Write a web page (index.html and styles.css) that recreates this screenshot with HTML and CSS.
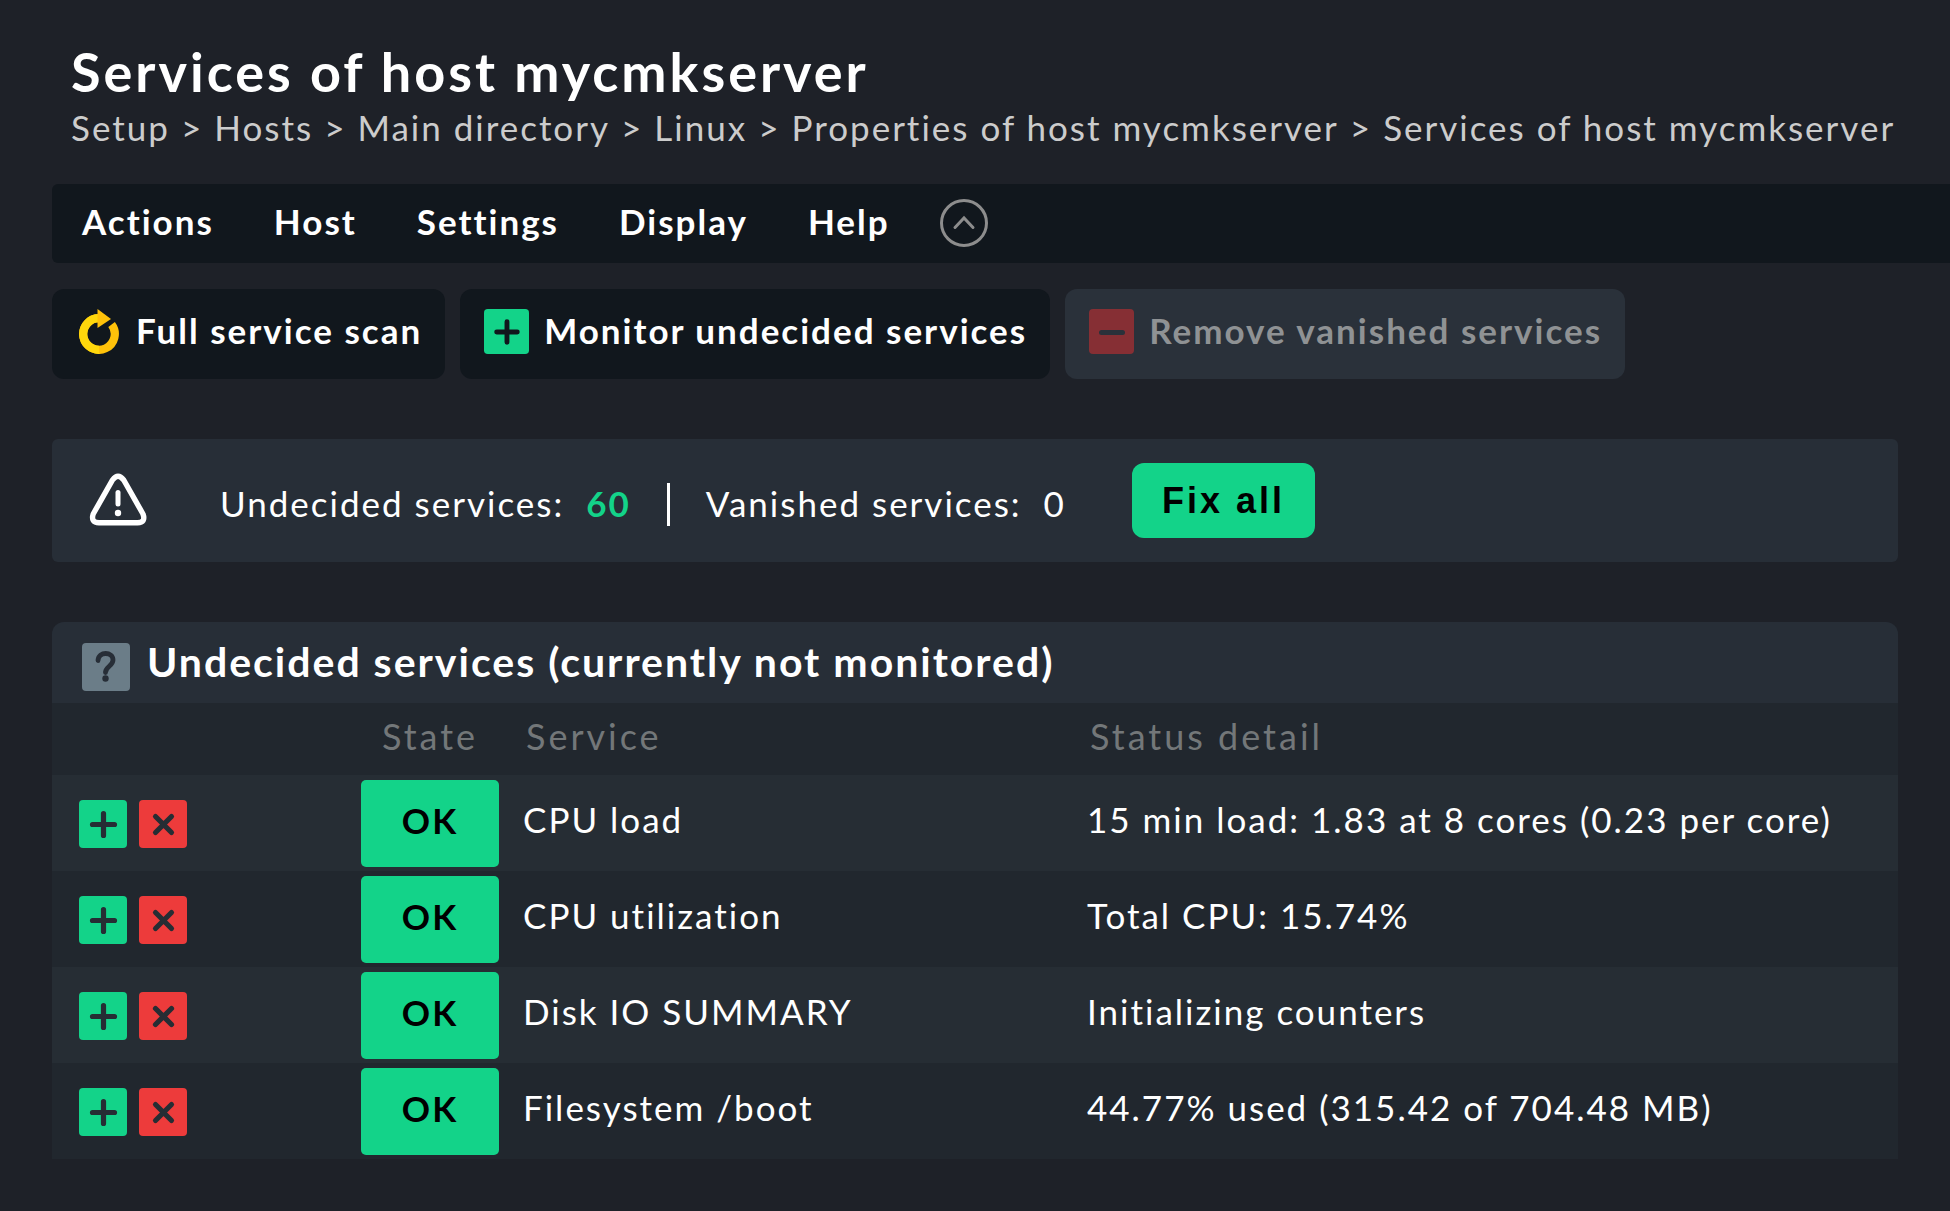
FILE: index.html
```html
<!DOCTYPE html>
<html lang="en">
<head>
<meta charset="utf-8">
<meta name="viewport" content="width=device-width, initial-scale=1">
<title>Services of host mycmkserver</title>
<link rel="stylesheet" href="styles.css">
</head>
<body>
<svg class="sprite" aria-hidden="true">
  <symbol id="plus" viewBox="0 0 48 48">
    <rect width="48" height="48" rx="4" fill="#13d389"/>
    <path d="M24.500 13.500v22M13.500 24.500h22" fill="none" stroke="currentColor" stroke-width="5.200" stroke-linecap="round"/>
  </symbol>
  <symbol id="cross" viewBox="0 0 48 48">
    <rect width="48" height="48" rx="4" fill="#ed3b3b"/>
    <path d="M16.500 16.500l16 16M32.500 16.500l-16 16" fill="none" stroke="currentColor" stroke-width="5.200" stroke-linecap="round"/>
  </symbol>
</svg>

<header class="page-header">
  <h1 class="title">Services of host mycmkserver</h1>
  <nav class="breadcrumb" aria-label="Breadcrumb">
    <a href="#">Setup</a><span>&gt;</span>
    <a href="#">Hosts</a><span>&gt;</span>
    <a href="#">Main directory</a><span>&gt;</span>
    <a href="#">Linux</a><span>&gt;</span>
    <a href="#">Properties of host mycmkserver</a><span>&gt;</span>
    <a href="#">Services of host mycmkserver</a>
  </nav>
</header>

<div class="menubar">
  <nav class="menu" aria-label="Page menu">
    <a href="#">Actions</a>
    <a href="#">Host</a>
    <a href="#">Settings</a>
    <a href="#">Display</a>
    <a href="#">Help</a>
  </nav>
  <button class="icon-button" type="button" aria-label="Hide shortcuts">
    <svg class="icon-48" viewBox="0 0 48 48"><circle cx="24" cy="24" r="22.500" fill="none" stroke="#8d8d8d" stroke-width="3"/><path d="M15 28.500l9-9.500 9 9.500" fill="none" stroke="#8d8d8d" stroke-width="3" stroke-linecap="round"/></svg>
  </button>
</div>

<div class="shortcuts">
  <button class="shortcut" type="button">
    <svg class="icon-45" viewBox="0 0 45 45"><path d="M23 9.200A15.800 15.800 0 1 0 35.600 15.500" fill="none" stroke="#ffc20a" stroke-width="8.200"/><path d="M23 9.200a15.800 15.800 0 0 0 0 31.600" fill="none" stroke="#ffd80c" stroke-width="8.200"/><path d="M21.500 0v19l13.500-9z" fill="#ffc20a"/></svg>
    <span>Full service scan</span>
  </button>
  <button class="shortcut" type="button">
    <svg class="icon-45"><use href="#plus"/></svg>
    <span>Monitor undecided services</span>
  </button>
  <button class="shortcut" type="button" disabled>
    <svg class="icon-45" viewBox="0 0 45 45"><rect width="45" height="45" rx="4" fill="#862f34"/><path d="M12.500 23.500h21" stroke="#2a313a" stroke-width="5" stroke-linecap="round"/></svg>
    <span>Remove vanished services</span>
  </button>
</div>

<main class="content">
  <section class="message">
    <svg class="icon-60" viewBox="0 0 60 60"><path d="M24.500 9Q30 1.500 35.700 9L55 43Q58 51.500 49.500 51.800H11Q2.500 51.500 5.200 43Z" fill="none" stroke="#fff" stroke-width="5.400"/><path d="M30 21.500v11.500" stroke="#fff" stroke-width="5" stroke-linecap="round"/><circle cx="30" cy="42" r="3.200" fill="#fff"/></svg>
    <p class="counts">
      <span>Undecided services:</span><strong>60</strong>
      <span class="divider"></span>
      <span>Vanished services:</span><span>0</span>
    </p>
    <button class="fix" type="button">Fix all</button>
  </section>

  <section class="panel">
    <h2 class="panel-title">
      <svg class="icon-48" viewBox="0 0 48 48"><rect width="48" height="48" rx="4" fill="#6b7d88"/><path d="M16 17.500C16.500 8 31 8.500 31 17c0 6-7.500 6.500-7.500 12.500" fill="none" stroke="#272e37" stroke-width="4.800" stroke-linecap="round"/><circle cx="23.500" cy="35.500" r="3.200" fill="#272e37"/></svg>
      Undecided services (currently not monitored)
    </h2>
    <table class="services">
      <colgroup><col class="col-actions"><col class="col-state"><col class="col-service"><col></colgroup>
      <thead>
        <tr><td></td><th scope="col" class="state">State</th><th scope="col">Service</th><th scope="col" class="detail">Status detail</th></tr>
      </thead>
      <tbody>
        <tr>
          <td><div class="actions"><button class="icon-button" type="button" aria-label="Monitor CPU load"><svg class="icon-48"><use href="#plus"/></svg></button><button class="icon-button" type="button" aria-label="Disable CPU load"><svg class="icon-48"><use href="#cross"/></svg></button></div></td>
          <td class="state"><span class="ok">OK</span></td><td>CPU load</td><td class="detail">15 min load: 1.83 at 8 cores (0.23 per core)</td>
        </tr>
        <tr>
          <td><div class="actions"><button class="icon-button" type="button" aria-label="Monitor CPU utilization"><svg class="icon-48"><use href="#plus"/></svg></button><button class="icon-button" type="button" aria-label="Disable CPU utilization"><svg class="icon-48"><use href="#cross"/></svg></button></div></td>
          <td class="state"><span class="ok">OK</span></td><td>CPU utilization</td><td class="detail">Total CPU: 15.74%</td>
        </tr>
        <tr>
          <td><div class="actions"><button class="icon-button" type="button" aria-label="Monitor Disk IO SUMMARY"><svg class="icon-48"><use href="#plus"/></svg></button><button class="icon-button" type="button" aria-label="Disable Disk IO SUMMARY"><svg class="icon-48"><use href="#cross"/></svg></button></div></td>
          <td class="state"><span class="ok">OK</span></td><td>Disk IO SUMMARY</td><td class="detail">Initializing counters</td>
        </tr>
        <tr>
          <td><div class="actions"><button class="icon-button" type="button" aria-label="Monitor Filesystem /boot"><svg class="icon-48"><use href="#plus"/></svg></button><button class="icon-button" type="button" aria-label="Disable Filesystem /boot"><svg class="icon-48"><use href="#cross"/></svg></button></div></td>
          <td class="state"><span class="ok">OK</span></td><td>Filesystem /boot</td><td class="detail">44.77% used (315.42 of 704.48 MB)</td>
        </tr>
      </tbody>
    </table>
  </section>
</main>
</body>
</html>
```
FILE: styles.css
```css
* {
  box-sizing: border-box;
}

body {
  margin: 0;
  padding: 40px 0 52px 52px;
  background: #1e2128;
  color: #fff;
  font: 400 35px/42px Lato, sans-serif;
  letter-spacing: 2px;
}

a {
  color: inherit;
  text-decoration: none;
}

button {
  border: 0;
  font: inherit;
  letter-spacing: inherit;
  color: inherit;
  cursor: pointer;
}

svg {
  display: block;
  flex: none;
}

.sprite {
  display: none;
}

.icon-45 {
  width: 45px;
  height: 45px;
}

.icon-48 {
  width: 48px;
  height: 48px;
}

.icon-60 {
  width: 60px;
  height: 60px;
}

.icon-button {
  padding: 0;
  background: none;
}

/* Title and breadcrumb */
.page-header {
  padding: 0 19px 36px;
}

.title {
  margin: 0 0 2px;
  font-size: 54px;
  line-height: 64px;
  letter-spacing: 3px;
}

.breadcrumb {
  display: flex;
  flex-wrap: wrap;
  column-gap: 11px;
  color: #ccc;
}

/* Menu bar */
.menubar {
  display: flex;
  align-items: center;
  gap: 50px;
  min-height: 79px;
  padding: 0 0 2px 30px;
  border-radius: 6px 0 0 6px;
  background: #11171d;
  font-weight: 700;
}

.menu {
  display: flex;
  gap: 60px;
  padding-bottom: 4px;
}

/* Shortcut buttons */
.shortcuts {
  display: flex;
  flex-wrap: wrap;
  gap: 15px;
  margin: 26px 52px 60px 0;
}

.shortcut {
  display: flex;
  align-items: center;
  gap: 15px;
  min-height: 90px;
  padding: 0 23px 6px 24px;
  border-radius: 12px;
  background: #11171d;
  color: #fff;
  font-weight: 700;
}

.shortcut span {
  padding-bottom: 2px;
}

.shortcut .icon-45 {
  color: #11171d;
}

.shortcut:disabled {
  background: #2a313a;
  color: #8f9294;
  cursor: default;
}

.content {
  margin-right: 52px;
}

/* Message bar */
.message {
  display: flex;
  align-items: center;
  min-height: 123px;
  padding: 24px 36px;
  border-radius: 6px;
  background: #272e37;
}

.counts {
  display: flex;
  align-items: center;
  gap: 22px;
  margin: 0 66px 0 72px;
  padding-top: 4px;
}

.counts strong {
  color: #13d389;
}

.divider {
  width: 3px;
  height: 43px;
  margin: 4px 14px 0;
  background: #fff;
}

.fix {
  min-height: 75px;
  padding: 0 30px;
  border-radius: 12px;
  background: #13d389;
  color: #000;
  font: 700 36px/42px "Liberation Sans", sans-serif;
  letter-spacing: 3px;
}

/* Services panel */
.panel {
  margin-top: 60px;
  border-radius: 12px 12px 0 0;
  overflow: hidden;
}

.panel-title {
  display: flex;
  align-items: center;
  gap: 17px;
  min-height: 81px;
  margin: 0;
  padding: 0 30px 2px;
  background: #272e37;
  font-size: 41px;
  line-height: 50px;
}

.panel-title svg {
  margin-top: 10px;
}

.services {
  width: 100%;
  table-layout: fixed;
  border-collapse: collapse;
}

.col-actions {
  width: 309px;
}

.col-state {
  width: 138px;
}

.col-service {
  width: 588px;
}

.services tr {
  background: #21272e;
}

.services tbody tr:nth-child(odd) {
  background: #262d34;
}

.services th {
  height: 72px;
  padding: 0 0 6px 27px;
  color: #737779;
  font-size: 36px;
  font-weight: 400;
  letter-spacing: 3px;
  text-align: left;
}

.services th.state {
  padding-left: 0;
  text-align: center;
}

.services th.detail {
  padding-left: 3px;
}

.services td {
  padding: 0 0 8px 24px;
}

.services tbody td {
  height: 96px;
}

.services td:first-child {
  padding: 2px 0 0 27px;
}

.services td.state {
  padding: 5px 0 4px;
}

.services td.detail {
  padding-left: 0;
}

.actions {
  display: flex;
  gap: 12px;
  color: #262d34;
}

.ok {
  display: flex;
  align-items: center;
  justify-content: center;
  height: 87px;
  padding-bottom: 7px;
  border-radius: 5px;
  background: #13d389;
  color: #000;
  font-weight: 700;
}
```
